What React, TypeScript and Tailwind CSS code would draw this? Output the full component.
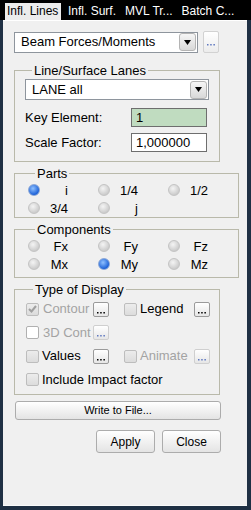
import React from 'react'

const font = "font-['Liberation_Sans',Arial,sans-serif]"

function DotGlyph() {
  return (
    <svg width="8" height="2" viewBox="0 0 8 2">
      <rect x="0" y="0" width="1.5" height="1.5" fill="currentColor" />
      <rect x="3.2" y="0" width="1.5" height="1.5" fill="currentColor" />
      <rect x="6.4" y="0" width="1.5" height="1.5" fill="currentColor" />
    </svg>
  )
}

function Arrow() {
  return (
    <div className="ml-auto mr-[1px] w-[17px] h-[18px] rounded-[3px] border border-[#b4b4b4] bg-gradient-to-b from-[#f6f6f6] to-[#d8d8d8] flex items-center justify-center">
      <svg width="7" height="5" viewBox="0 0 7 5">
        <path d="M0 0h7L3.5 5z" fill="#000" />
      </svg>
    </div>
  )
}

function Combo({ text, className }: { text: string; className: string }) {
  return (
    <div
      className={`h-[21px] border border-[#8e959d] bg-white flex items-center pl-[6px] text-[13px] text-black ${className}`}
    >
      <span>{text}</span>
      <Arrow />
    </div>
  )
}

function Dots({ disabled, className = '' }: { disabled?: boolean; className?: string }) {
  return (
    <div
      className={`w-[16px] h-[15px] rounded-[2px] border ${
        disabled ? 'border-[#cfcfcf] text-[#5f78c0]' : 'border-[#9a9a9a] text-black'
      } bg-gradient-to-b from-white to-[#e6e6e6] flex items-end justify-center pb-[2px] ${className}`}
    >
      <DotGlyph />
    </div>
  )
}

function Radio({ on }: { on?: boolean }) {
  return on ? (
    <div className="w-[12px] h-[12px] rounded-full border border-[#8aa6d6] bg-[radial-gradient(circle_at_40%_35%,#8fc0ff,#1d62d8_70%)]" />
  ) : (
    <div className="w-[12px] h-[12px] rounded-full border border-[#c4c4c4] bg-[radial-gradient(circle_at_40%_35%,#f4f4f4,#cacaca_75%)]" />
  )
}

function RadioItem({ label, on }: { label: string; on?: boolean }) {
  return (
    <div className="w-[70px] flex items-center">
      <Radio on={on} />
      <span className="w-[28px] text-right text-[13px] leading-[15px]">{label}</span>
    </div>
  )
}

function Check({ checked, white }: { checked?: boolean; white?: boolean }) {
  return (
    <div
      className={`w-[13px] h-[13px] rounded-[2px] border ${
        white ? 'border-[#b0b0b0] bg-white' : 'border-[#bdbdbd] bg-gradient-to-b from-[#ececec] to-[#dcdcdc]'
      } flex items-center justify-center`}
    >
      {checked && (
        <svg width="9" height="8" viewBox="0 0 9 8">
          <path d="M1 4l2.5 2.5L8 1" stroke="#a0a0a0" strokeWidth="2" fill="none" />
        </svg>
      )}
    </div>
  )
}

function Group({ title, className, children }: { title: string; className: string; children: React.ReactNode }) {
  return (
    <fieldset className={`w-[206px] border border-[#b9b9aa] ${className}`}>
      <legend className="ml-[7px] px-[2px] text-[13px] leading-[15px] text-black">{title}</legend>
      {children}
    </fieldset>
  )
}

export default function App() {
  const tabs = ['Infl. Surf.', 'MVL Tr...', 'Batch C...']

  return (
    <div className={`w-[251px] h-[510px] bg-[#1f3044] flex flex-col ${font}`}>
      {/* Tabs */}
      <div className="h-[20px] bg-black flex items-end pl-[5px] shrink-0">
        <div className="h-[17px] w-[56px] bg-[#ececec] text-black text-[12px] leading-[17px] pl-[2px]">
          Infl. Lines
        </div>
        <div className="flex text-white text-[12px] leading-[17px]">
          {tabs.map((t) => (
            <span key={t} className="ml-[7px] mr-[2px]">
              {t}
            </span>
          ))}
        </div>
      </div>

      {/* Panel */}
      <div className="ml-[3px] w-[244px] h-[486px] bg-[#f0f0f0] border-t border-white border-b border-b-[#fafafa] flex flex-col pl-[11px] text-black">
        <div className="flex items-center mt-[10px]">
          <Combo text="Beam Forces/Moments" className="w-[184px]" />
          <div className="ml-[5px] w-[16px] h-[22px] rounded-[2px] border border-[#d2d2d2] bg-gradient-to-b from-white to-[#ececec] flex items-end justify-center pb-[6px] text-[#5f78c0]">
            <DotGlyph />
          </div>
        </div>

        <Group title="Line/Surface Lanes" className="mt-[10px] h-[99px] px-[10px]">
          <Combo text="LANE all" className="w-[184px] h-[20px] mt-[1px]" />
          <div className="flex items-center mt-[8px] h-[19px]">
            <span className="w-[106px] text-[13px]">Key Element:</span>
            <div className="w-[76px] h-[19px] border border-[#6e6e6e] bg-[#c0dcc0] text-[13px] leading-[17px] pl-[4px]">1</div>
          </div>
          <div className="flex items-center mt-[6px] h-[19px]">
            <span className="w-[106px] text-[13px]">Scale Factor:</span>
            <div className="w-[76px] h-[19px] border border-[#6e6e6e] bg-white text-[13px] leading-[17px] pl-[4px]">1,000000</div>
          </div>
        </Group>

        <Group title="Parts" className="mt-[4px] h-[52px] pl-[13px]">
          <div className="flex h-[18px] items-center">
            <RadioItem label="i" on />
            <RadioItem label="1/4" />
            <RadioItem label="1/2" />
          </div>
          <div className="flex h-[18px] items-center">
            <RadioItem label="3/4" />
            <RadioItem label="j" />
          </div>
        </Group>

        <Group title="Components" className="mt-[4px] h-[56px] pl-[13px]">
          <div className="flex h-[18px] items-center">
            <RadioItem label="Fx" />
            <RadioItem label="Fy" />
            <RadioItem label="Fz" />
          </div>
          <div className="flex h-[18px] items-center">
            <RadioItem label="Mx" />
            <RadioItem label="My" on />
            <RadioItem label="Mz" />
          </div>
        </Group>

        <Group title="Type of Display" className="mt-[4px] h-[113px] pl-[11px] text-[13px]">
          <div className="flex items-center h-[24px]">
            <div className="w-[67px] flex items-center gap-[4px]">
              <Check checked />
              <span className="text-[#a3a3a3]">Contour</span>
            </div>
            <Dots />
            <div className="ml-[15px] w-[70px] flex items-center gap-[3px]">
              <Check />
              <span>Legend</span>
            </div>
            <Dots />
          </div>
          <div className="flex items-center h-[23px]">
            <div className="w-[67px] flex items-center gap-[4px]">
              <Check white />
              <span className="text-[#a3a3a3]">3D Cont</span>
            </div>
            <Dots disabled />
          </div>
          <div className="flex items-center h-[24px]">
            <div className="w-[67px] flex items-center gap-[3px]">
              <Check />
              <span>Values</span>
            </div>
            <Dots />
            <div className="ml-[15px] w-[70px] flex items-center gap-[3px]">
              <Check />
              <span className="text-[#a3a3a3]">Animate</span>
            </div>
            <Dots disabled />
          </div>
          <div className="flex items-center h-[23px]">
            <div className="flex items-center gap-[3px]">
              <Check />
              <span>Include Impact factor</span>
            </div>
          </div>
        </Group>

        <button className="mt-[6px] ml-[1px] w-[206px] h-[19px] rounded-[3px] border border-[#acacac] bg-gradient-to-b from-white to-[#e4e4e4] text-[11px] leading-[17px]">
          Write to File...
        </button>

        <div className="flex justify-end gap-[7px] mt-[10px] w-[207px]">
          <button className="w-[59px] h-[23px] rounded-[3px] border border-[#acacac] bg-gradient-to-b from-white to-[#e4e4e4] text-[12px]">
            Apply
          </button>
          <button className="w-[59px] h-[23px] rounded-[3px] border border-[#acacac] bg-gradient-to-b from-white to-[#e4e4e4] text-[12px]">
            Close
          </button>
        </div>
      </div>
    </div>
  )
}
